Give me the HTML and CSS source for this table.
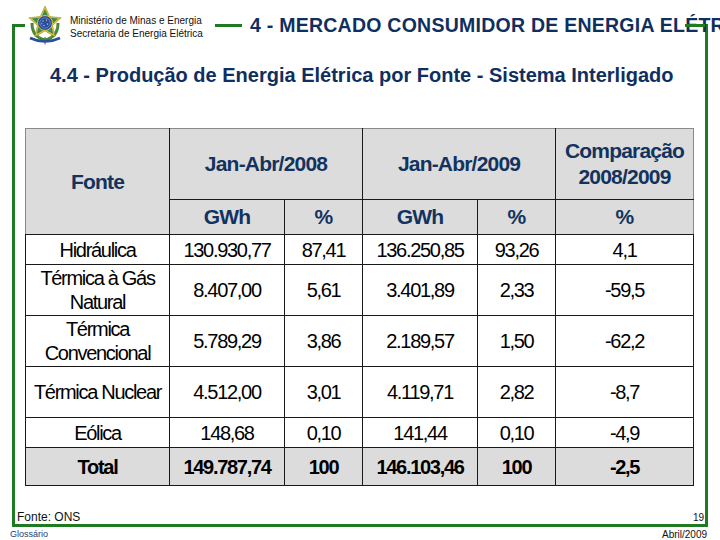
FILE: index.html
```html
<!DOCTYPE html>
<html lang="pt-BR">
<head>
<meta charset="utf-8">
<title>4.4 - Produção de Energia Elétrica por Fonte</title>
<link rel="stylesheet" href="styles.css">
</head>
<body>
<div class="page">
  <div class="frame">
    <header class="masthead">
      <span class="rule rule-lead"></span>
      <svg class="logo" viewBox="0 0 36 40" aria-hidden="true">
        <path d="M18 32 L18 39.5" stroke="#8a8a8a" stroke-width="1.4"/>
        <path d="M15.5 34 L20.5 34" stroke="#8a8a8a" stroke-width="1"/>
        <path d="M5 18 Q5 32 18 35 Q31 32 31 18" fill="none" stroke="#3f8a3a" stroke-width="3"/>
        <path d="M6 21 Q8 30 14 33" fill="none" stroke="#b59a3a" stroke-width="1" stroke-dasharray="1.5 1.5"/>
        <path d="M30 21 Q28 30 22 33" fill="none" stroke="#b59a3a" stroke-width="1" stroke-dasharray="1.5 1.5"/>
        <path d="M18 1 L22.7 11.53 L34.17 12.75 L25.61 20.47 L28 31.75 L18 26 L8 31.75 L10.39 20.47 L1.83 12.75 L13.3 11.53 Z" fill="#e2c53a" stroke="#9a8a2a" stroke-width="0.6"/>
        <path d="M18 4 L21.8 12.6 L31.2 13.6 L24.2 19.9 L26.2 29.1 L18 24.4 L9.8 29.1 L11.8 19.9 L4.8 13.6 L14.2 12.6 Z" fill="#3d8c45"/>
        <circle cx="18" cy="18" r="7.5" fill="#2b4f9e" stroke="#e2c53a" stroke-width="1"/>
        <circle cx="18" cy="18" r="5.2" fill="none" stroke="#8fa6d6" stroke-width="0.5"/>
        <circle cx="16" cy="16" r="0.6" fill="#fff"/>
        <circle cx="19.5" cy="15" r="0.6" fill="#fff"/>
        <circle cx="20.5" cy="19" r="0.6" fill="#fff"/>
        <circle cx="17" cy="20.5" r="0.6" fill="#fff"/>
        <circle cx="14.8" cy="18.8" r="0.5" fill="#fff"/>
        <path d="M3 33 Q18 40 33 33" fill="none" stroke="#2b4f9e" stroke-width="2.6"/>
      </svg>
      <div class="org">
        <div>Ministério de Minas e Energia</div>
        <div>Secretaria de Energia Elétrica</div>
      </div>
      <span class="rule rule-mid"></span>
      <h1 class="title">4 - MERCADO CONSUMIDOR DE ENERGIA ELÉTRICA</h1>
    </header>
    <span class="rule rule-end"></span>

    <h2 class="subtitle">4.4 - Produção de Energia Elétrica por Fonte - Sistema Interligado</h2>

    <table class="data">
      <colgroup>
        <col class="c-fonte">
        <col class="c-gwh">
        <col class="c-pct">
        <col class="c-gwh">
        <col class="c-pct">
        <col class="c-comp">
      </colgroup>
      <thead>
        <tr class="h1">
          <th rowspan="2" class="fonte">Fonte</th>
          <th colspan="2">Jan-Abr/2008</th>
          <th colspan="2">Jan-Abr/2009</th>
          <th class="comp">Comparação 2008/2009</th>
        </tr>
        <tr class="h2">
          <th>GWh</th>
          <th>%</th>
          <th>GWh</th>
          <th>%</th>
          <th class="last">%</th>
        </tr>
      </thead>
      <tbody>
        <tr class="r-short">
          <td>Hidráulica</td><td>130.930,77</td><td>87,41</td><td>136.250,85</td><td>93,26</td><td>4,1</td>
        </tr>
        <tr class="r-tall">
          <td>Térmica à Gás Natural</td><td>8.407,00</td><td>5,61</td><td>3.401,89</td><td>2,33</td><td>-59,5</td>
        </tr>
        <tr class="r-tall">
          <td>Térmica Convencional</td><td>5.789,29</td><td>3,86</td><td>2.189,57</td><td>1,50</td><td>-62,2</td>
        </tr>
        <tr class="r-tall">
          <td>Térmica Nuclear</td><td>4.512,00</td><td>3,01</td><td>4.119,71</td><td>2,82</td><td>-8,7</td>
        </tr>
        <tr class="r-short">
          <td>Eólica</td><td>148,68</td><td>0,10</td><td>141,44</td><td>0,10</td><td>-4,9</td>
        </tr>
        <tr class="total">
          <td>Total</td><td>149.787,74</td><td>100</td><td>146.103,46</td><td>100</td><td>-2,5</td>
        </tr>
      </tbody>
    </table>

    <div class="frame-foot">
      <span class="source">Fonte: ONS</span>
      <span class="pageno">19</span>
    </div>
  </div>
  <div class="below">
    <span class="gloss">Glossário</span>
    <span class="date">Abril/2009</span>
  </div>
</div>
</body>
</html>
```

FILE: styles.css
```css
* { box-sizing: border-box; }

html, body {
  margin: 0;
  padding: 0;
}

body {
  width: 720px;
  height: 540px;
  overflow: hidden;
  background: #ffffff;
  font-family: "Liberation Sans", Arial, sans-serif;
  color: #000;
}

.page {
  width: 720px;
  height: 540px;
  padding-top: 24px;
}

.frame {
  position: relative;
  margin-left: 12px;
  width: 696px;
  height: 503px;
  border: 3px solid #1f7a22;
  border-top: 0;
  display: flex;
  flex-direction: column;
}

/* header strip sitting on the frame's top line */
.masthead {
  display: flex;
  align-items: center;
  height: 40px;
  margin-top: -19px;
}

.rule {
  display: block;
  height: 3px;
  background: #1f7a22;
  flex-shrink: 0;
}

.masthead .rule {
  align-self: flex-start;
  margin-top: 19px;
}

.rule-lead { width: 10px; }

.logo {
  width: 36px;
  height: 40px;
  margin-left: 2px;
  flex-shrink: 0;
}

.org {
  width: 132px;
  margin-left: 7px;
  margin-top: 3px;
  font-size: 10px;
  line-height: 13px;
  color: #111;
  white-space: nowrap;
  flex-shrink: 0;
}

.rule-mid {
  width: 27px;
  margin-left: 13px;
}

/* the slide title runs past the frame; the window edge clips it */
.title {
  flex-shrink: 0;
  margin: 0 0 0 8px;
  font-size: 19.5px;
  letter-spacing: 0.25px;
  line-height: 22px;
  font-weight: bold;
  color: #0f2f5e;
  white-space: nowrap;
}

.rule-end {
  position: absolute;
  top: 0;
  right: 0;
  width: 20px;
}

.subtitle {
  margin: 18px 0 0 35px;
  font-size: 20px;
  line-height: 24px;
  font-weight: bold;
  color: #0f2f5e;
  white-space: nowrap;
}

/* data table */
.data {
  border-collapse: collapse;
  table-layout: fixed;
  width: 669px;
  margin: 41px 0 0 10px;
  font-size: 20px;
  letter-spacing: -1.3px;
  color: #000;
}

.c-fonte { width: 144px; }
.c-gwh { width: 115px; }
.c-pct { width: 78px; }
.c-comp { width: 138px; }

.data th,
.data td {
  border: 1px solid #1a1a1a;
  padding: 0 2px;
  text-align: center;
  vertical-align: middle;
  line-height: 24px;
}

.data thead th {
  background: #dcdcdc;
  color: #13335f;
  font-weight: bold;
  font-size: 21px;
  letter-spacing: -0.8px;
}

.data .h1 th { border-top-color: #8a8a8a; }
.data thead th.fonte { border-left-color: #8a8a8a; }
.data thead th.comp,
.data thead th.last { border-right-color: #8a8a8a; }

.data th.comp { line-height: 26px; }

.data .h1 { height: 71px; }
.data .h2 { height: 35px; }
.data .r-short { height: 30px; }
.data .r-tall { height: 51px; }

.data .total { height: 38px; }
.data .total td {
  background: #dcdcdc;
  font-weight: bold;
}

/* footer inside frame */
.frame-foot {
  margin-top: auto;
  display: flex;
  justify-content: space-between;
  align-items: flex-end;
  padding: 0 1px 0 2px;
}

.source {
  font-size: 12px;
  line-height: 14px;
  color: #111;
}

.pageno {
  font-size: 10px;
  line-height: 12px;
  color: #111;
}

.below {
  display: flex;
  justify-content: space-between;
  align-items: center;
  padding: 2px 13px 0 10px;
  height: 13px;
}

.gloss {
  font-size: 9px;
  line-height: 11px;
  color: #23406e;
}

.date {
  font-size: 10px;
  line-height: 11px;
  color: #111;
}
```
